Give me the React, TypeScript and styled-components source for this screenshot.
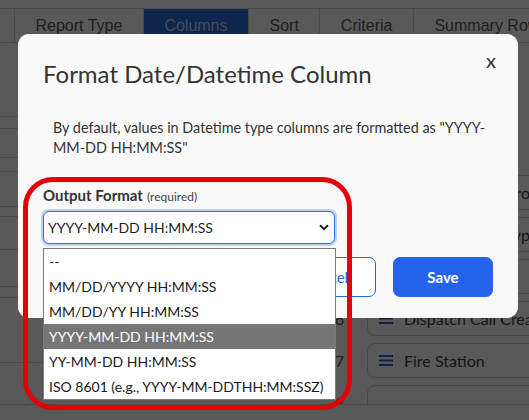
import React from "react";
import styled, { createGlobalStyle } from "styled-components";

const GlobalStyle = createGlobalStyle`
  html, body { margin: 0; padding: 0; background: #ffffff; }
  body { font-family: "Lato", "Open Sans", sans-serif; overflow: hidden; }
  * { box-sizing: border-box; }
`;

const Page = styled.div`
  width: 529px;
  height: 420px;
  padding-top: 8px;
  background: #ffffff;
`;

const TabBar = styled.div`
  display: flex;
  height: 35px;
  border-top: 1px solid #d6d6d6;
  border-bottom: 1px solid #d6d6d6;
  font-family: "Liberation Sans", Arial, sans-serif;
  font-size: 16px;
  white-space: nowrap;
  overflow: hidden;
`;

const TabLead = styled.div`
  width: 14px;
  flex: none;
`;

const Tab = styled.div<{ $active?: boolean }>`
  flex: none;
  display: flex;
  align-items: center;
  padding: 0 20.5px;
  border-left: 1px solid #d6d6d6;
  background: ${(p) => (p.$active ? "#2a6ae0" : "transparent")};
  color: ${(p) => (p.$active ? "#c8d6ef" : "#5c5c5c")};
`;

const Body = styled.div`
  display: flex;
  height: 362px;
  border-bottom: 1px solid #d6d6d6;
  overflow: hidden;
`;

const LeftCol = styled.div`
  width: 228px;
  flex: none;
  display: flex;
  flex-direction: column;
`;

const Strip = styled.div<{ $h: number }>`
  height: ${(p) => p.$h}px;
  flex: none;
  border-bottom: 1px solid #d6d6d6;
`;

const MidCol = styled.div`
  width: 100px;
  flex: none;
`;

const NumCol = styled.div`
  width: 39px;
  flex: none;
  display: flex;
  flex-direction: column;
  gap: 7px;
  padding-top: 132px;
  font-family: "Lato", sans-serif;
  font-size: 16px;
  color: #5c5c5c;
`;

const Num = styled.div`
  height: 35px;
  flex: none;
  display: flex;
  align-items: center;
  padding-left: 7px;
`;

const CardCol = styled.div`
  flex: 1;
  display: flex;
  flex-direction: column;
  gap: 7px;
  padding-top: 132px;
`;

const FieldCard = styled.div`
  height: 35px;
  flex: none;
  display: flex;
  align-items: center;
  gap: 11px;
  padding-left: 11px;
  width: 240px;
  border: 1px solid #cfcfcf;
  border-radius: 8px;
  font-family: "Lato", sans-serif;
  font-size: 16px;
  color: #444;
  white-space: nowrap;
  background: #fff;
`;

const Backdrop = styled.div`
  position: fixed;
  inset: 0;
  background: rgba(0, 0, 0, 0.65);
`;

const Modal = styled.div`
  position: fixed;
  left: 18px;
  top: 34px;
  width: 500px;
  height: 284px;
  background: #f9f9f9;
  border-radius: 11px;
  padding: 25px 25px 23px;
  display: flex;
  flex-direction: column;
  color: #333;
`;

const Header = styled.div`
  display: flex;
  justify-content: space-between;
  align-items: flex-start;
`;

const Title = styled.h2`
  margin: 0;
  font-size: 24px;
  line-height: 29px;
  font-weight: 400;
  color: #333;
`;

const Close = styled.button`
  border: none;
  background: none;
  padding: 0;
  margin: -11px -3px 0 0;
  font-family: "Lato", sans-serif;
  font-size: 20px;
  line-height: 24px;
  color: #333;
  cursor: pointer;
`;

const Description = styled.p`
  margin: 30px 0 0;
  padding-left: 10px;
  font-size: 14.4px;
  line-height: 20px;
  color: #333;
`;

const Field = styled.div`
  margin-top: 28px;
  width: 292px;
  position: relative;
`;

const Label = styled.label`
  display: block;
  font-size: 15px;
  line-height: 18px;
  font-weight: 700;
  color: #333;
  margin-bottom: 5px;
`;

const Hint = styled.span`
  font-size: 12px;
  font-weight: 400;
  color: #444;
  margin-left: 4px;
`;

const SelectBox = styled.div`
  height: 33px;
  display: flex;
  align-items: center;
  justify-content: space-between;
  padding: 0 5px 0 4px;
  background: #fff;
  border: 1px solid #2f6bea;
  border-radius: 6px;
  box-shadow: 0 0 0 2px #b9d3f7;
  font-size: 14px;
  color: #222;
`;

const OptionList = styled.div`
  position: absolute;
  left: 0;
  top: calc(100% + 4px);
  width: 293px;
  background: #fff;
  border: 1px solid #7a7a7a;
  z-index: 2;
`;

const Option = styled.div<{ $selected?: boolean }>`
  height: 25px;
  display: flex;
  align-items: center;
  padding-left: 5px;
  font-size: 14px;
  white-space: nowrap;
  background: ${(p) => (p.$selected ? "#767676" : "#fff")};
  color: ${(p) => (p.$selected ? "#fff" : "#1a1a1a")};
`;

const Footer = styled.div`
  margin-top: 13px;
  display: flex;
  justify-content: flex-end;
  gap: 17px;
`;

const Button = styled.button<{ $primary?: boolean }>`
  width: 100px;
  height: 40px;
  border-radius: 7px;
  font-family: "Lato", sans-serif;
  font-size: 15px;
  font-weight: ${(p) => (p.$primary ? 700 : 400)};
  border: 1px solid #2563eb;
  background: ${(p) => (p.$primary ? "#2563eb" : "#fff")};
  color: ${(p) => (p.$primary ? "#fff" : "#2563eb")};
  cursor: pointer;
`;

const Annotation = styled.div`
  position: fixed;
  left: 23px;
  top: 177px;
  width: 329px;
  height: 233px;
  border: 5px solid #e3000b;
  border-radius: 30px;
  pointer-events: none;
`;

const Chevron = () => (
  <svg width="10" height="7" viewBox="0 0 10 7" aria-hidden>
    <path d="M1 1.2 L5 5.2 L9 1.2" fill="none" stroke="#222" strokeWidth="2" />
  </svg>
);

const Burger = () => (
  <svg width="14" height="11" viewBox="0 0 14 11" aria-hidden>
    <rect x="0" y="0" width="14" height="2" fill="#2e5fd0" />
    <rect x="0" y="4.5" width="14" height="2" fill="#2e5fd0" />
    <rect x="0" y="9" width="14" height="2" fill="#2e5fd0" />
  </svg>
);

const options = [
  "--",
  "MM/DD/YYYY HH:MM:SS",
  "MM/DD/YY HH:MM:SS",
  "YYYY-MM-DD HH:MM:SS",
  "YY-MM-DD HH:MM:SS",
  "ISO 8601 (e.g., YYYY-MM-DDTHH:MM:SSZ)",
];

const cards = [
  "Station Area's Group",
  "Alarm Priority Type",
  "Unit",
  "Dispatch Call Created",
  "Fire Station",
  "",
];

const strips = [74, 12, 29, 14, 35, 10, 33, 37, 11, 65];

export default function App() {
  return (
    <>
      <GlobalStyle />
      <Page>
        <TabBar>
          <TabLead />
          <Tab>Report Type</Tab>
          <Tab $active>Columns</Tab>
          <Tab>Sort</Tab>
          <Tab>Criteria</Tab>
          <Tab>Summary Row</Tab>
        </TabBar>
        <Body>
          <LeftCol>
            {strips.map((h, i) => (
              <Strip key={i} $h={h} />
            ))}
          </LeftCol>
          <MidCol />
          <NumCol>
            {[3, 4, 5, 6, 7, 8].map((n) => (
              <Num key={n}>{n}</Num>
            ))}
          </NumCol>
          <CardCol>
            {cards.map((c, i) => (
              <FieldCard key={i}>
                {c && <Burger />}
                {c}
              </FieldCard>
            ))}
          </CardCol>
        </Body>
      </Page>
      <Backdrop />
      <Modal>
        <Header>
          <Title>Format Date/Datetime Column</Title>
          <Close aria-label="Close">x</Close>
        </Header>
        <Description>
          By default, values in Datetime type columns are formatted as "YYYY-MM-DD HH:MM:SS"
        </Description>
        <Field>
          <Label>
            Output Format<Hint>(required)</Hint>
          </Label>
          <SelectBox role="combobox" aria-expanded="true">
            <span>YYYY-MM-DD HH:MM:SS</span>
            <Chevron />
          </SelectBox>
          <OptionList role="listbox">
            {options.map((o) => (
              <Option key={o} $selected={o === "YYYY-MM-DD HH:MM:SS"} role="option">
                {o}
              </Option>
            ))}
          </OptionList>
        </Field>
        <Footer>
          <Button>Cancel</Button>
          <Button $primary>Save</Button>
        </Footer>
      </Modal>
      <Annotation />
    </>
  );
}
